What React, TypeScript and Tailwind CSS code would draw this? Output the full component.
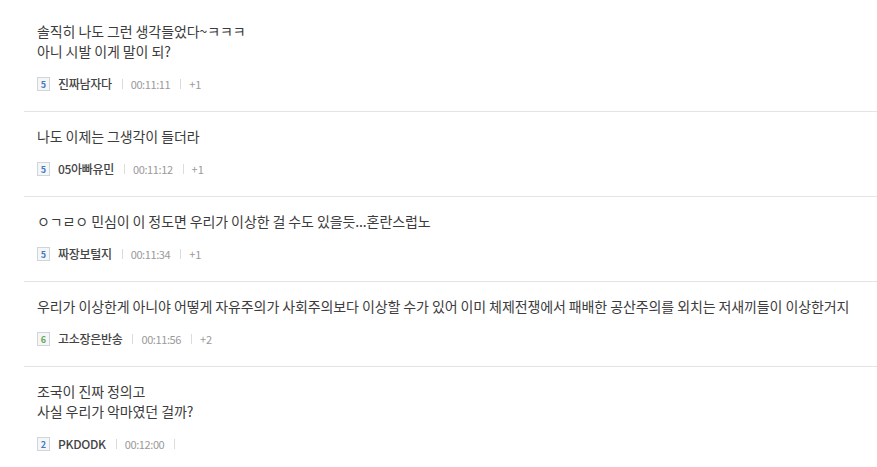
const comments = [
  {
    lines: ["솔직히 나도 그런 생각들었다~ㅋㅋㅋ", "아니 시발 이게 말이 되?"],
    level: "5",
    nick: "진짜남자다",
    time: "00:11:11",
    plus: "+1",
  },
  {
    lines: ["나도 이제는 그생각이 들더라"],
    level: "5",
    nick: "05아빠유민",
    time: "00:11:12",
    plus: "+1",
  },
  {
    lines: ["ㅇㄱㄹㅇ 민심이 이 정도면 우리가 이상한 걸 수도 있을듯...혼란스럽노"],
    level: "5",
    nick: "짜장보털지",
    time: "00:11:34",
    plus: "+1",
  },
  {
    lines: [
      "우리가 이상한게 아니야 어떻게 자유주의가 사회주의보다 이상할 수가 있어 이미 체제전쟁에서 패배한 공산주의를 외치는 저새끼들이 이상한거지",
    ],
    level: "6",
    nick: "고소장은반송",
    time: "00:11:56",
    plus: "+2",
  },
  {
    lines: ["조국이 진짜 정의고", "사실 우리가 악마였던 걸까?"],
    level: "2",
    nick: "PKDODK",
    time: "00:12:00",
    plus: "",
  },
];

const LevelBadge = ({ level }: { level: string }) => {
  const green = level === "6";
  return (
    <span
      className={
        "flex h-[14px] w-[13px] items-center justify-center border border-[#cfd5db] bg-[#f4f6f8] text-[9px] font-bold leading-none " +
        (green ? "text-[#6aa84f]" : "text-[#4a78c0]")
      }
    >
      {level}
    </span>
  );
};

const Separator = () => (
  <span className="ml-[10px] mr-[8px] h-[10px] w-px bg-[#dcdcdc]" />
);

export default function App() {
  return (
    <div
      className="min-h-screen bg-white pt-[7px] pl-[24px] text-[#333]"
      style={{ fontFamily: '"Noto Sans CJK KR", "Noto Sans", sans-serif' }}
    >
      {comments.map((c, i) => (
        <div
          key={i}
          className={
            "pt-[14px] pb-[17px] pl-[13px] " +
            (i < comments.length - 1 ? "border-b border-[#e4e4e4]" : "")
          }
        >
          <div className="text-[14px] leading-[20px] tracking-[-0.1px] text-[#3c3c3c]">
            {c.lines.map((l, j) => (
              <p key={j}>{l}</p>
            ))}
          </div>
          <div className="mt-[13px] flex h-[20px] items-center text-[11px]">
            <LevelBadge level={c.level} />
            <span className="ml-[8px] text-[12px] font-medium tracking-[-0.3px] text-[#444]">
              {c.nick}
            </span>
            <Separator />
            <span className="tracking-[-0.4px] text-[#9a9a9a]">{c.time}</span>
            <Separator />
            <span className="text-[#9a9a9a]">{c.plus}</span>
          </div>
        </div>
      ))}
    </div>
  );
}
